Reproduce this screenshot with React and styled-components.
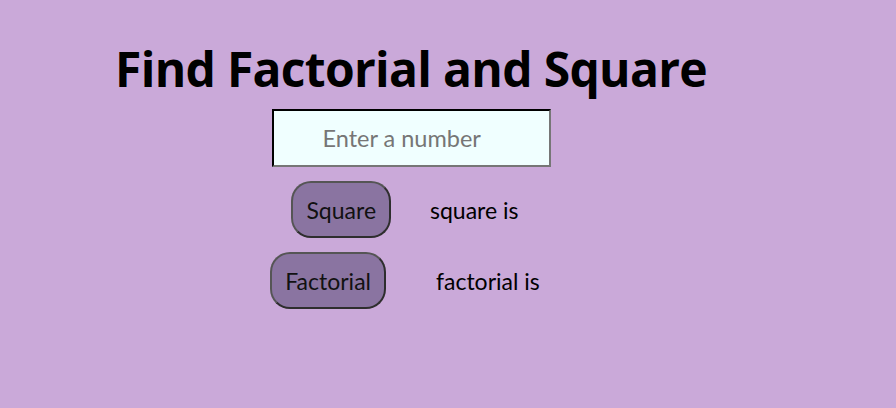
import React from "react";
import styled, { createGlobalStyle } from "styled-components";

const Global = createGlobalStyle`
  html, body { margin: 0; padding: 0; }
  body {
    background: #caa9d9;
    width: 896px;
    height: 408px;
    overflow: hidden;
  }
`;

const Page = styled.div`
  width: 822px;
  display: flex;
  flex-direction: column;
  align-items: center;
  padding-top: 37px;
`;

const Title = styled.h1`
  margin: 0 0 8px;
  font-family: "Open Sans", sans-serif;
  font-weight: 700;
  font-size: 48px;
  line-height: 64px;
  letter-spacing: -0.7px;
  color: #000;
`;

const NumberInput = styled.input`
  box-sizing: border-box;
  width: 279px;
  height: 58px;
  background: #f0ffff;
  border: 2px inset #767676;
  border-top-color: #1a1a1a;
  border-left-color: #1a1a1a;
  padding: 0 0 0 49px;
  font-family: "Lato", sans-serif;
  font-size: 23.5px;
  outline: none;
  &::placeholder { color: #767676; }
`;

const Row = styled.div`
  display: flex;
  align-items: center;
  gap: ${(p) => p.$gap}px;
  margin-top: 14px;
  margin-right: 12px;
`;

const ActionButton = styled.button`
  box-sizing: border-box;
  height: 57px;
  padding: 0 13px;
  background: #8a74a1;
  border: 2px solid #2e2e2e;
  border-top-color: #555;
  border-left-color: #555;
  border-radius: 20px;
  font-family: "Lato", sans-serif;
  font-size: 23px;
  color: #111;
`;

const Result = styled.span`
  font-family: "Lato", sans-serif;
  font-size: 23px;
  color: #000;
`;

export default function App() {
  return (
    <>
      <Global />
      <Page>
        <Title>Find Factorial and Square</Title>
        <NumberInput type="number" placeholder="Enter a number" />
        <Row $gap={39}>
          <ActionButton>Square</ActionButton>
          <Result>square is</Result>
        </Row>
        <Row $gap={50}>
          <ActionButton>Factorial</ActionButton>
          <Result>factorial is</Result>
        </Row>
      </Page>
    </>
  );
}
